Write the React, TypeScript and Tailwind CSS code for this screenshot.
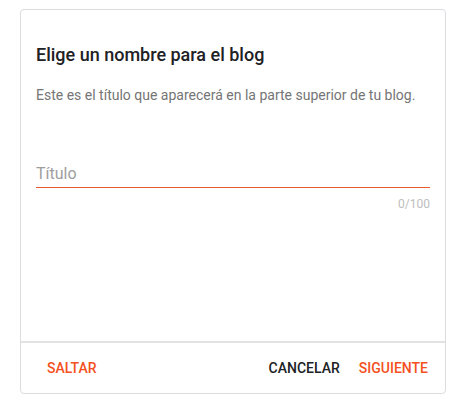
export default function App() {
  return (
    <div className="min-h-screen bg-white font-['Roboto','Liberation_Sans',sans-serif]">
      <div className="pt-[9px] pl-[20px]">
        <div className="flex h-[385px] w-[426px] flex-col rounded-[4px] border border-[#dadce0] bg-white">
          {/* Body */}
          <div className="flex-1 px-[15px] pt-[33px]">
            <h2 className="text-[18px] leading-[24px] font-medium text-[#202124]">
              Elige un nombre para el blog
            </h2>
            <p className="mt-[18px] text-[14px] leading-[20px] text-[#757575]">
              Este es el título que aparecerá en la parte superior de tu blog.
            </p>

            <div className="mt-[57px]">
              <input
                type="text"
                placeholder="Título"
                className="block w-full border-b border-[#e8592f] bg-transparent pb-[1px] text-[16px] leading-[24px] text-[#202124] outline-none placeholder:text-[#9e9e9e]"
              />
              <div className="mt-[8px] text-right text-[12px] leading-[16px] text-[#bdbdbd]">
                0/100
              </div>
            </div>
          </div>

          {/* Footer */}
          <div className="flex h-[52px] items-center border-t-2 border-[#e2e2e2] pl-[18px] pr-[9px]">
            <button className="px-2 py-2 text-[14px] leading-[20px] font-medium uppercase text-[#f4511e]">
              Saltar
            </button>
            <div className="ml-auto flex items-center gap-[3px]">
              <button className="px-2 py-2 text-[14px] leading-[20px] font-medium uppercase text-[#202124]">
                Cancelar
              </button>
              <button className="px-2 py-2 text-[14px] leading-[20px] font-medium uppercase text-[#f4511e]">
                Siguiente
              </button>
            </div>
          </div>
        </div>
      </div>
    </div>
  );
}
